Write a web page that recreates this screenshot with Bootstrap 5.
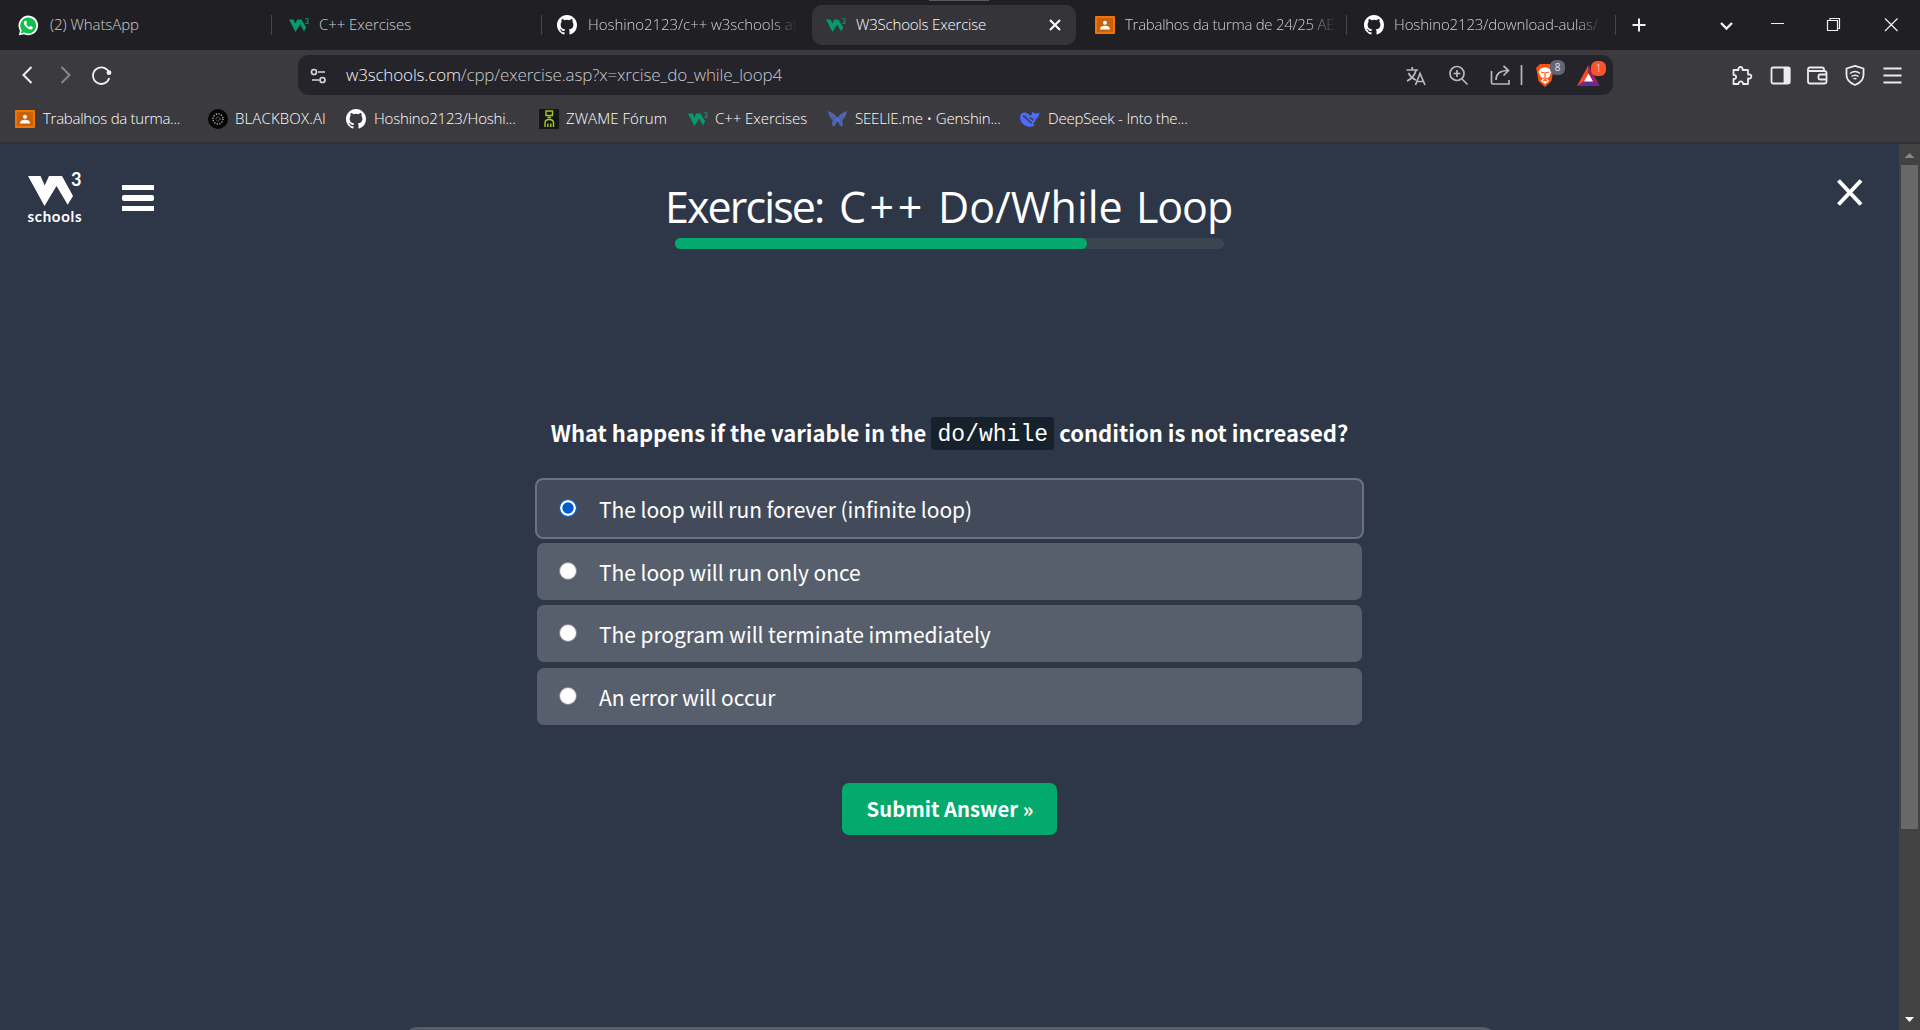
<!DOCTYPE html>
<html lang="pt">
<head>
<meta charset="utf-8">
<title>W3Schools Exercise</title>
<link href="https://cdn.jsdelivr.net/npm/bootstrap@5.3.0/dist/css/bootstrap.min.css" rel="stylesheet">
<style>
html,body{height:100%;overflow:hidden}
body{background:#2e3748;color:#fff;font-family:"Open Sans","Noto Sans",sans-serif;font-size:15px;line-height:20px}
svg{display:block;flex:none}
.tabstrip{height:50px;background:#202024;color:#cfcfd1}
.tab{height:50px;padding-left:18px;font-weight:300}
.tab .ttl{white-space:nowrap;overflow:hidden;padding-bottom:2px}
.tab svg{margin-right:11px}
.sep{width:1px;height:20px;background:#47474b;flex:none}
.fade-end{-webkit-mask-image:linear-gradient(90deg,#000 88%,transparent);mask-image:linear-gradient(90deg,#000 88%,transparent)}
.tab-on{height:40px;width:264px;background:#343439;border-radius:10px;color:#fff;padding-left:14px}
.grip{left:929px;width:60px;height:1px;background:#5a5a5d}
.tight-1{letter-spacing:-.06px}
.tight-2{letter-spacing:-.13px}
.tight-3{letter-spacing:-.19px}
.tight-4{letter-spacing:-.28px}
.loose-1{letter-spacing:.05px}
.loose-2{letter-spacing:.14px}
.toolbar{height:50px;background:#3b3a3f}
.omni{width:1315px;height:40px;background:#25242a;border-radius:11px;font-size:17px;color:#c9c9cc;font-weight:300}
.omni b{font-weight:300;color:#f2f2f3}
.url{width:1058px;letter-spacing:-.154px}
.pip{width:15px;height:15px;border-radius:6px;font:10px/15px "Open Sans",sans-serif;text-align:center;top:-4px;left:14px}
.pip-grey{background:#636576;color:#e4e4e8}
.pip-red{background:#fb542b}
.marks{height:44px;background:#3b3a3f;border-bottom:2px solid #323136;padding:0 0 0 15px;font-size:15px}
.marks a{color:#fff;text-decoration:none;white-space:nowrap;height:37px;font-weight:300}
.marks svg{margin-right:8px}
.marks span{padding-bottom:1px}
.sbar{width:21px;background:#424242;padding:0 2px}
.thumb{height:664px;background:#686868}
.page-h{font-size:43px;line-height:60px;font-weight:400;margin:0;font-family:"Open Sans","Noto Sans",sans-serif;white-space:nowrap}
.w-ex{width:174px;letter-spacing:-1.900px}
.w-cpp{width:99px;letter-spacing:3.500px}
.w-do{width:198px}
.w-loop{width:98px;letter-spacing:-1.100px}
.meter{width:549px;height:11px;border-radius:6px;background:#39464f}
.meter .progress-bar{background:#04aa6d;border-radius:6px}
.quiz{font-family:"Noto Sans CJK SC",sans-serif;width:829px}
.ask{font-size:22px;font-weight:700;line-height:30px;height:33px;white-space:nowrap}
.ask code{font:400 23px/36px "Liberation Mono",monospace;color:#fff;background:#17212b;border-radius:3px;width:123px;height:33px;margin:0 5px 0 5px;text-align:center;display:inline-block}
.opt{height:57px;border-radius:7px;background:#585f6c;margin:0 2px;padding-left:22px;font-size:21px;line-height:28px;letter-spacing:-.05px}
.opt span{padding-top:1px}
.opt.on{height:61px;border:2px solid #6b717d;background:#434b5b;border-radius:8px;margin:0}
.dot{width:18px;height:18px;border-radius:50%;background:#fff;border:1px solid #858585;margin:0 22px 2px 0}
.opt.on .dot{background:#005ccc;border:1px solid #0a66d6;box-shadow:inset 0 0 0 2.300px #fff;margin-bottom:1px}
.send{width:215px;height:52px;background:#04aa6d;color:#fff;border-radius:7px;font:700 20.300px/48px "Noto Sans CJK SC",sans-serif;padding:0 0 2px 1px;border:0;white-space:nowrap}
.peek{left:403px;width:1094px;height:30px;top:1027px;border-radius:16px;background:#555d6a}
</style>
</head>
<body class="d-flex flex-column">
<svg class="d-none">
<symbol id="gh" viewBox="0 0 16 16"><path d="M8 0C3.580 0 0 3.580 0 8c0 3.540 2.290 6.530 5.470 7.590.4.070.550-.170.550-.380 0-.190-.010-.820-.010-1.490-2.010.370-2.530-.490-2.690-.940-.090-.230-.480-.940-.820-1.130-.280-.150-.680-.520-.010-.530.630-.010 1.080.580 1.230.820.720 1.210 1.870.870 2.330.660.070-.520.280-.870.510-1.070-1.780-.2-3.640-.890-3.640-3.950 0-.870.310-1.590.820-2.150-.080-.2-.360-1.020.080-2.120 0 0 .670-.210 2.200.820a7.600 7.600 0 0 1 4 0c1.530-1.040 2.200-.820 2.200-.820.440 1.100.160 1.920.080 2.120.510.560.820 1.270.820 2.150 0 3.070-1.870 3.750-3.650 3.950.290.250.540.730.540 1.480 0 1.070-.010 1.930-.010 2.200 0 .210.150.460.550.380A8 8 0 0 0 16 8c0-4.420-3.580-8-8-8z" fill="#fff"/></symbol>
<symbol id="cls" viewBox="0 0 20 18"><rect width="20" height="18" rx="1" fill="#f27408"/><rect x="2" y="2" width="16" height="14" fill="#c96208"/><circle cx="10" cy="6.800" r="2" fill="#fff"/><path d="M5 13.500c0-3 2.500-3.800 5-3.800s5 .8 5 3.800z" fill="#fff"/></symbol>
<symbol id="w3f" viewBox="0 0 20 16"><path d="M0 2.500H4.600L6.400 6.500L8.200 2.500H12.500L17.200 10.500L15 14.500L11.300 7.500L6.500 15Z" fill="#06996a"/><text x="15.800" y="7" font-size="7.500" font-weight="700" fill="#06996a" font-family="Lato">3</text></symbol>
</svg>

<div class="tabstrip d-flex align-items-center position-relative">
 <div class="grip position-absolute top-0"></div>
 <div class="tab d-flex align-items-center" style="width:271px"><svg width="21" height="21" viewBox="0 0 21 21"><path d="M.8 20.300L2 15.600A9.800 9.800 0 1 1 6 19.200Z" fill="#fff"/><path d="M2.600 18.500L3.700 15.300A8 8 0 1 1 6.300 17.600Z" fill="#10c04f"/><path d="M6.500 6.200c.8-.9 1.600-.8 1.900 0l.6 1.500c.1.500-.8 1.200-.7 1.500.6 1.200 1.600 2.100 2.900 2.700.4.200 1.100-1 1.500-.9l1.900 1c.4.300-.1 1.700-.9 2.200-2.700 1.300-7.900-3.200-7.900-6.400 0-.6.300-1.200.7-1.600z" fill="#fff"/></svg><span class="ttl tight-1">(2) WhatsApp</span></div>
 <div class="sep"></div>
 <div class="tab d-flex align-items-center" style="width:269px;padding-left:17px"><svg width="20" height="16" style="margin-right:10px"><use href="#w3f"/></svg><span class="ttl tight-1">C++ Exercises</span></div>
 <div class="sep"></div>
 <div class="tab d-flex align-items-center" style="width:270px;padding-left:15px"><svg width="20" height="20"><use href="#gh"/></svg><span class="ttl fade-end tight-1" style="width:209px">Hoshino2123/c++ w3schools at</span></div>
 <div class="tab tab-on d-flex align-items-center"><svg width="20" height="16" style="margin-right:10px"><use href="#w3f"/></svg><span class="ttl tight-3" style="width:193px">W3Schools Exercise</span><svg width="12" height="12" viewBox="0 0 12 12" stroke="#fff" stroke-width="2"><path d="M1 1L11 11M11 1L1 11"/></svg></div>
 <div class="tab d-flex align-items-center" style="width:270px;padding-left:19px"><svg width="20" height="18" style="margin-right:10px"><use href="#cls"/></svg><span class="ttl fade-end tight-4" style="width:211px">Trabalhos da turma de 24/25 AE</span></div>
 <div class="sep"></div>
 <div class="tab d-flex align-items-center" style="width:268px;padding-left:17px"><svg width="20" height="20" style="margin-right:10px"><use href="#gh"/></svg><span class="ttl fade-end tight-2" style="width:208px">Hoshino2123/download-aulas/</span></div>
 <div class="sep"></div>
 <svg width="304" height="50" viewBox="1616 0 304 50" fill="none" stroke="#f0f0f1"><path d="M1639 18.500V31.500M1632.500 25H1645.500" stroke-width="2"/><path d="M1721 23L1726.500 28.500L1732 23" stroke-width="2.400"/><path d="M1771 23.500H1784M1827.500 20.500H1837.500V30.500H1827.500ZM1830 20V18.500H1839.500V28.500H1838" stroke-width="1.200"/><path d="M1885 18.500L1897.500 31M1897.500 18.500L1885 31" stroke-width="1.200"/></svg>
</div>

<div class="toolbar d-flex align-items-center">
 <svg width="298" height="50" viewBox="0 50 298 50" fill="none" stroke="#f0f0f1" stroke-width="2"><path d="M31.500 67L23.500 75L31.500 83"/><path d="M61.500 67L69.500 75L61.500 83" stroke="#87878b"/><path d="M109 72.500A8.300 8.300 0 1 0 109.300 78" stroke-width="1.800"/><circle cx="109" cy="72.700" r="2.400" fill="#f0f0f1" stroke="none"/></svg>
 <div class="omni d-flex align-items-center">
  <svg width="48" height="40" viewBox="298 55 48 40" fill="none" stroke="#d6d6d9" stroke-width="1.700"><circle cx="314" cy="72" r="2.500"/><path d="M318 72H325M312 80H319"/><circle cx="322.500" cy="80" r="2.500"/></svg>
  <div class="url flex-shrink-0"><b>w3schools.com</b>/cpp/exercise.asp?x=xrcise_do_while_loop4</div>
  <svg width="132" height="40" viewBox="1404 55 132 40" fill="none" stroke="#b9b9bd" stroke-width="1.700"><path d="M1406.500 70H1418M1412.200 67V70M1408.500 73C1410.500 77 1413 79 1416 80M1416 70C1415 75 1411 79 1407 81M1415.500 85L1420 73.500L1425 85M1417.500 81.500H1423"/><circle cx="1457" cy="73.500" r="7"/><path d="M1462 79L1467.500 84.500M1457 70V77M1453.500 73.500H1460.500M1491.500 71V82.500Q1491.500 84 1493 84H1509V80M1496 80C1496 73 1501 70.500 1508 70.500M1503.500 66L1508.500 70.500L1503.500 75.500"/><path d="M1521.500 65V85"/></svg>
  <div class="position-relative"><svg width="18" height="23" viewBox="0 0 18 23"><path d="M4 0H14L18 4L17 8L15.500 17L9 23L2.500 17L1 8L0 4Z" fill="#fb5410"/><path d="M4 5L9 3L14 5L15.500 8L13 13L11 14.500L13 17L9 20L5 17L7 14.500L5 13L2.500 8Z" fill="#fff"/><path d="M5 8L8 9M13 8L10 9M9 8V14M7 14L9 15.500L11 14M7 17L9 16L11 17" stroke="#fb5410" stroke-width="1.200" fill="none"/></svg><div class="pip pip-grey position-absolute">8</div></div>
  <div class="position-relative" style="margin-left:23px"><svg width="23" height="21" viewBox="0 0 23 21"><path d="M11.500 0L0 21L11.500 14Z" fill="#ff4a1f"/><path d="M11.500 0L23 21L11.500 14Z" fill="#9e1f63"/><path d="M0 21H23L11.500 13Z" fill="#662d91"/><path d="M11.500 8.500L7 16.500H16Z" fill="#fff"/></svg><div class="pip pip-red position-absolute">1</div></div>
 </div>
 <svg width="307" height="50" viewBox="1613 50 307 50" fill="none" stroke="#ececee" stroke-width="1.800" stroke-linejoin="round"><path d="M1733.500 70H1738.500C1737.500 66 1743.500 66 1742.500 70H1748V74.500C1752.500 73.500 1752.500 79.500 1748 78.500V84H1743C1743.500 80.500 1738 80.500 1738.500 84H1733.500V79C1737 79.500 1737 74.500 1733.500 75Z"/><rect x="1771.500" y="67.500" width="18" height="16" rx="1.500"/><path d="M1784.500 68H1789.500V83H1784.500Z" fill="#ececee"/><path d="M1824 71V69.500Q1824 67.500 1822 67.500H1810Q1808 67.500 1808 69.500V81.500Q1808 83.500 1810 83.500H1824Q1826.500 83.500 1826.500 81.500V73Q1826.500 71 1824 71H1809M1826.500 74.500H1820Q1818.500 74.500 1818.500 76V78Q1818.500 79.500 1820 79.500H1826.500"/><path d="M1855 65.800L1863.500 68.500V75C1863.500 80 1860 83 1855 85C1850 83 1846.500 80 1846.500 75V68.500Z"/><path d="M1850 73.500Q1855 69.500 1860 73.500M1851.500 76.500Q1855 73.800 1858.500 76.500M1853.500 79Q1855 78 1856.500 79" stroke-width="1.500"/><path d="M1883.500 68.500H1901.500M1883.500 75.500H1901.500M1883.500 82.500H1901.500"/></svg>
</div>

<nav class="marks d-flex align-items-start">
 <a class="d-flex align-items-center" style="width:193px"><svg width="20" height="18"><use href="#cls"/></svg><span class="tight-4">Trabalhos da turma...</span></a>
 <a class="d-flex align-items-center" style="width:138px"><svg width="20" height="20" viewBox="0 0 20 20" style="margin-right:7px"><circle cx="10" cy="10" r="10" fill="#060606"/><circle cx="10" cy="10" r="5" fill="none" stroke="#aaa" stroke-width="1.500" stroke-dasharray="1.200 1.400"/><circle cx="10" cy="10" r="2" fill="none" stroke="#999" stroke-dasharray="1 1"/></svg><span class="loose-2">BLACKBOX.AI</span></a>
 <a class="d-flex align-items-center" style="width:193px"><svg width="20" height="20"><use href="#gh"/></svg><span class="tight-3">Hoshino2123/Hoshi...</span></a>
 <a class="d-flex align-items-center" style="width:149px"><svg width="20" height="20" viewBox="0 0 20 20" style="margin-right:7px"><rect width="20" height="20" fill="#161616"/><path d="M7 2H13.500V6.500H7ZM8.500 8.500H12M6 18V14Q6 10.500 10.200 10.500Q14.500 10.500 14.500 14V18M8.800 18V14.500M11.800 18V14.500" fill="none" stroke="#a5cc1e" stroke-width="1.400"/></svg><span class="loose-1">ZWAME Fórum</span></a>
 <a class="d-flex align-items-center" style="width:140px"><svg width="20" height="16" style="margin-right:7px"><use href="#w3f"/></svg><span class="tight-1">C++ Exercises</span></a>
 <a class="d-flex align-items-center" style="width:192px"><svg width="19" height="18" viewBox="0 0 19 18"><path d="M0 1Q7 3 9.500 8Q12 3 19 1Q18 8 14 10Q16 13 14 17Q11 15 9.500 11Q8 15 5 17Q3 13 5 10Q1 8 0 1Z" fill="#5262a8"/><path d="M9.500 7L12 12L9.500 11L7 12Z" fill="#4d6bfe"/></svg><span class="tight-3">SEELIE.me • Genshin...</span></a>
 <a class="d-flex align-items-center"><svg width="20" height="17" viewBox="0 0 20 17"><path d="M13 1C14 4 15 4 19.500 2.500C19 6 18 8 16 9C15.500 11 14 13 13 14L15 15.500C11 17.500 6 17 3 14C0 11-1 6 1.500 3.500C4 1.500 8 3 10 5.500C11 6 12 4 13 1Z" fill="#4d6bfe"/><path d="M3 6C6 6 8 12 12 13M9.500 8.500C11 7.500 12.500 9 13 10.500" stroke="#3b3a3f" stroke-width="1.500" fill="none"/></svg><span class="tight-3">DeepSeek - Into the...</span></a>
</nav>

<div class="d-flex flex-grow-1">
 <main class="flex-grow-1 d-flex flex-column align-items-center">
  <header class="w-100 d-flex justify-content-between align-items-start" style="height:106px">
   <svg width="300" height="106" viewBox="0 144 300 106" fill="#fff"><path d="M28 176H40.500L44.700 185.500L49 176H62L73 196L67.700 204.700L56.500 186L44.500 206Z"/><text x="71" y="186" font-family="Lato" font-weight="700" font-size="19" textLength="10.500" lengthAdjust="spacingAndGlyphs">3</text><text x="27.500" y="221.500" font-family="Lato" font-weight="700" font-size="15" textLength="54" lengthAdjust="spacing">schools</text><rect x="122" y="185" width="32" height="5"/><rect x="122" y="195" width="32" height="6" rx="2"/><rect x="122" y="206" width="32" height="5"/></svg>
   <div class="d-flex flex-column align-items-center" style="padding-top:33px"><h1 class="page-h d-flex"><span class="w-ex">Exercise:</span> <span class="w-cpp">C++</span> <span class="w-do">Do/While</span> <span class="w-loop">Loop</span></h1><div class="meter" style="margin-top:1px"><div class="progress-bar h-100" style="width:75%"></div></div></div>
   <svg width="300" height="106" viewBox="1599 144 300 106" stroke="#fff" stroke-width="4"><path d="M1838.500 180.500L1861 204.500M1861 180.500L1838.500 204.500"/></svg>
  </header>
  <section class="quiz" style="margin-top:167px">
   <div class="ask d-flex justify-content-center"><span>What happens if the variable in the</span><code>do/while</code><span>condition is not increased?</span></div>
   <div class="d-flex flex-column" style="margin-top:28px">
    <div class="opt on d-flex align-items-center" style="margin-bottom:4px"><i class="dot"></i><span>The loop will run forever (infinite loop)</span></div>
    <div class="opt d-flex align-items-center" style="margin-bottom:5px"><i class="dot"></i><span>The loop will run only once</span></div>
    <div class="opt d-flex align-items-center" style="margin-bottom:6px"><i class="dot"></i><span>The program will terminate immediately</span></div>
    <div class="opt d-flex align-items-center"><i class="dot"></i><span>An error will occur</span></div>
   </div>
   <div class="text-center" style="margin-top:58px"><button class="btn send">Submit Answer »</button></div>
  </section>
 </main>
 <aside class="sbar"><svg width="17" height="21" viewBox="0 0 17 21"><path d="M3.500 14L8.500 9L13.500 14Z" fill="#868686"/></svg><div class="thumb"></div><svg width="17" height="201" viewBox="0 829 17 201"><path d="M4 1017H13L8.500 1022Z" fill="#fff"/></svg></aside>
</div>
<div class="peek position-absolute"></div>
<script src="https://cdn.jsdelivr.net/npm/bootstrap@5.3.0/dist/js/bootstrap.bundle.min.js"></script>
</body>
</html>
